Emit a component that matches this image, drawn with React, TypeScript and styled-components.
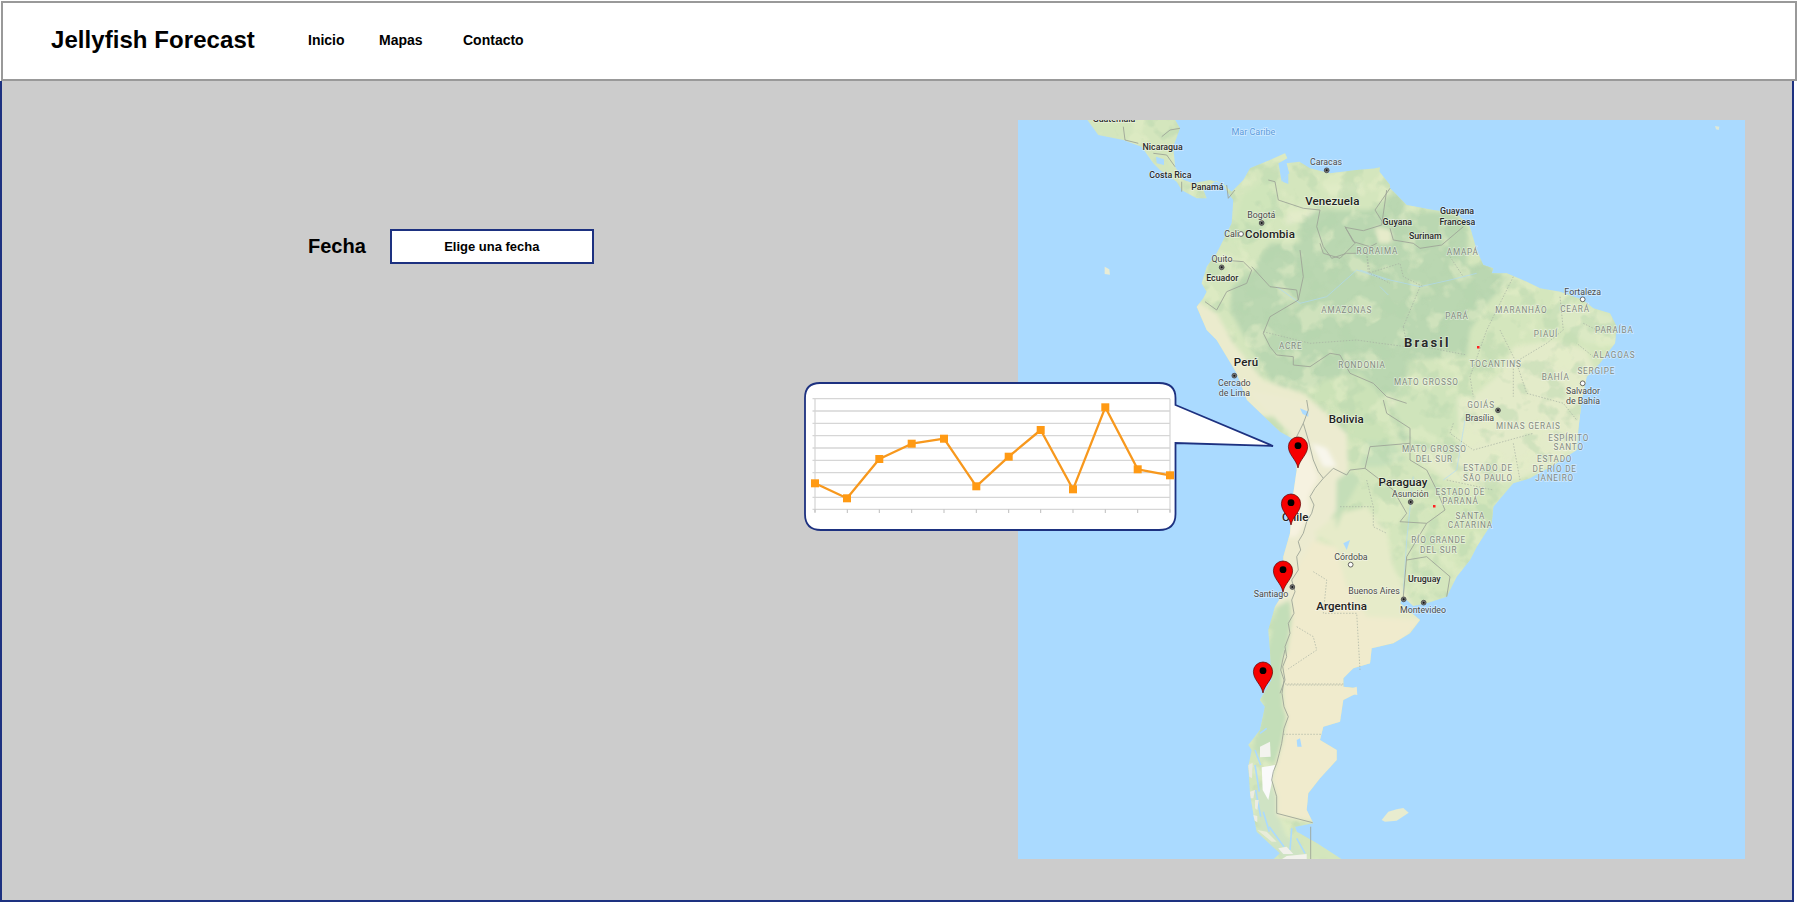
import React from "react";
import styled, { createGlobalStyle } from "styled-components";

const GlobalStyle = createGlobalStyle`
  html, body { margin: 0; padding: 0; background: #fff; overflow: hidden; }
  * { box-sizing: border-box; }
  body { font-family: "Liberation Sans", Arial, sans-serif; color: #000; }
`;

const Page = styled.div`
  display: flex;
  flex-direction: column;
  width: 1797px;
  height: 902px;
`;

const Header = styled.header`
  display: flex;
  align-items: center;
  height: 80px;
  margin: 1px 0 0 1px;
  padding: 0 0 2px 48px;
  background: #fff;
  border: 2px solid #999;
  position: relative;
  z-index: 1;
`;

const Brand = styled.h1`
  margin: 0;
  width: 257px;
  font-size: 24px;
  font-weight: 700;
  letter-spacing: 0.06px;
  white-space: nowrap;
`;

const Nav = styled.nav`
  display: flex;
  align-items: center;
`;

const NavLink = styled.a<{ $width: number }>`
  width: ${(p) => p.$width}px;
  font-size: 14px;
  font-weight: 700;
  color: #000;
  text-decoration: none;
`;

const Main = styled.main`
  position: relative;
  display: flex;
  align-items: flex-start;
  width: 1794px;
  height: 821px;
  padding: 39px 47px 0 306px;
  background: #ccc;
  border: 2px solid #1d3180;
  border-top: 0;
`;

const DateRow = styled.div`
  display: flex;
  align-items: center;
  gap: 24px;
  margin-top: 109px;
`;

const DateLabel = styled.span`
  font-size: 20px;
  font-weight: 700;
`;

const DateButton = styled.button`
  width: 204px;
  height: 35px;
  padding: 0;
  background: #fff;
  border: 2px solid #1d3180;
  font-family: inherit;
  font-size: 13px;
  font-weight: 700;
  color: #000;
`;

const MapFrame = styled.svg`
  display: block;
  flex: none;
  width: 727px;
  height: 739px;
  margin-left: auto;
  background: #aadaff;
`;

const Callout = styled.svg`
  position: absolute;
  left: 801px;
  top: 300px;
  width: 474px;
  height: 151px;
`;

const MapText = styled.text<{ $size: number; $weight: number; $color: string; $spacing: number }>`
  font-family: Roboto, "Liberation Sans", sans-serif;
  font-size: ${(p) => p.$size}px;
  font-weight: ${(p) => p.$weight};
  fill: ${(p) => p.$color};
  letter-spacing: ${(p) => p.$spacing}px;
  text-anchor: middle;
  dominant-baseline: central;
  paint-order: stroke;
  stroke: rgba(255, 255, 255, 0.45);
  stroke-width: 1.5px;
`;

type Origin = [number, number];
const Z3: Origin = [1010, 110];
const Z4: Origin = [1300, 110];
const Z5: Origin = [1180, 400];
const Z6: Origin = [1140, 650];

const pts = (o: Origin, flat: number[]) => {
  const out: string[] = [];
  for (let i = 0; i < flat.length; i += 2) {
    out.push(`${(o[0] + flat[i] / 3).toFixed(1)},${(o[1] + flat[i + 1] / 3).toFixed(1)}`);
  }
  return out.join(" ");
};

const LAND = [
  pts(Z3, [490,20,510,55,490,110,495,170,520,210,550,220,600,210,640,222,665,245,700,210,720,175,780,150,825,130,832,145,805,160,815,215,838,190,830,160,868,155,900,175,960,190,1040,180,1100,175,1140,225]),
  pts(Z4, [270,235,320,285,400,300,470,310,510,350,530,420,550,465,580,475,575,490,620,490,680,515,720,535,780,545,850,570,880,595,930,610,950,650,945,700,900,760,860,800,845,870,835,960,830,1020]),
  pts(Z5, [1130,190,1050,235,1000,250,940,320,935,370,890,440,870,480,830,530,800,590,740,610,700,618,670,590,660,610,720,660,690,700,640,730,575,745,570,790,520,805]),
  pts(Z6, [610,85,610,110,650,115,650,130,610,150,600,215,550,230,540,270,590,300,590,330,540,385,505,430,500,480,520,520,465,530,470,545,530,580,605,628,700,720,300,720,420,610,350,545,340,490,330,430,325,350,335,300,325,285,360,240,375,170,360,150,395,90,390,0]),
  pts(Z5, [265,690,285,620,310,580,310,470,330,400,340,280,350,210,345,120,300,95]),
  pts(Z3, [711,870,680,790,620,690,590,660,560,590,580,565,590,545,575,520,590,470,620,430,640,390,665,340,670,270,655,250,640,225,620,212,580,240,590,265,560,265,515,240,500,215,450,180,430,160,395,110,340,90,265,75,225,20]),
].join(" ");

type Zone = { o: Origin; p: number[]; fill: string };

const GREENS: Zone[] = [
  { o: Z4, p: [640,710,760,690,860,720,890,800,860,1030,470,1030,460,900,530,850,600,790], fill: "#e3ebc9" },
  { o: Z5, p: [600,-10,1190,-10,1150,180,1010,240,900,260,800,240,730,190,680,120,620,60], fill: "#e3ebc9" },
  { o: Z4, p: [770,560,880,600,940,620,945,700,860,700,780,640], fill: "#dbe9c4" },
  { o: Z5, p: [720,260,780,240,900,270,950,300,930,380,880,470,820,520,780,440], fill: "#d3e6bb" },
  { o: Z3, p: [665,530,720,490,780,400,870,400,930,340,940,310,1120,300,1140,240,1170,240,1190,300,1190,860,1000,830,900,830,830,860,790,825,720,710,660,600], fill: "#bad7b1" },
  { o: Z4, p: [50,300,220,300,330,310,400,305,470,315,505,360,500,470,560,460,590,490,640,500,570,570,510,660,500,740,330,750,260,800,250,850,120,740,0,760,0,300], fill: "#bad7b1" },
  { o: Z5, p: [385,-10,610,-10,690,85,680,130,600,70,500,50,430,20], fill: "#bad7b1" },
  { o: Z3, p: [835,305,930,295,880,330,825,345], fill: "#e2eacb" },
  { o: Z3, p: [930,225,1060,215,1060,250,960,255], fill: "#dceac4" },
  { o: Z4, p: [225,350,275,360,275,400,235,400], fill: "#e6ebca" },
  { o: Z3, p: [700,255,780,200,800,260,790,320,700,430,660,380], fill: "#cfe5ba" },
  { o: Z4, p: [70,810,180,790,250,860,300,960,230,1030,90,960,30,860], fill: "#cbe2b7" },
  { o: Z4, p: [300,810,470,830,480,1020,340,1010,280,900], fill: "#cfe4bb" },
  { o: Z5, p: [560,120,640,130,680,180,600,200,540,200], fill: "#c5dfb9" },
  { o: Z5, p: [600,640,700,630,710,680,640,720,590,700], fill: "#dbe8c3" },
];

const ARID: Zone[] = [
  { o: Z3, p: [540,560,620,610,670,700,760,810,880,850,960,920,700,920,540,640], fill: "#ebebcd" },
  { o: Z5, p: [200,-30,400,10,500,100,505,220,470,330,410,420,370,520,340,620,260,620,300,300,330,100], fill: "#ecebd0" },
  { o: Z5, p: [350,500,400,420,470,440,500,560,600,630,740,650,640,760,600,920,280,920,310,770,335,620], fill: "#f0ebcd" },
  { o: Z6, p: [435,-10,720,-10,720,540,410,500,395,390,425,280,440,200,430,170], fill: "#f0ebcd" },
  { o: Z5, p: [400,400,480,340,560,320,620,400,640,500,690,600,720,660,560,650,500,560,470,440], fill: "#e6ebc9" },
  { o: Z5, p: [470,240,510,212,540,240,490,330,468,390], fill: "#c4deb8" },
  { o: Z5, p: [340,120,390,160,415,235,385,290,390,340,350,410,318,410,335,250], fill: "#f6f2e0" },
  { o: Z5, p: [395,130,440,145,470,200,430,200], fill: "#f8f6ec" },
];

const SOUTH: Zone[] = [
  { o: Z6, p: [380,-10,436,-10,425,60,430,170,440,200,425,280,405,345,340,300,355,240,375,170,360,150], fill: "#c3deb8" },
  { o: Z6, p: [395,390,410,440,410,490,440,560,490,610,510,628,430,628,360,545,340,430], fill: "#cfe3c4" },
  { o: Z5, p: [265,750,290,620,330,600,335,660,320,760], fill: "#c3deb8" },
  { o: Z6, p: [470,530,515,530,600,628,510,628,480,580], fill: "#d4e6bd" },
];

const WHITES: Zone[] = [
  { o: Z6, p: [360,290,390,275,392,320,360,322], fill: "#f3f3ee" },
  { o: Z6, p: [365,352,405,345,395,400,385,450,368,420], fill: "#fafafa" },
  { o: Z6, p: [325,345,338,338,336,385,328,380], fill: "#e9eae0" },
  { o: Z6, p: [330,425,345,420,340,445,332,445], fill: "#ecece2" },
  { o: Z6, p: [345,450,356,450,352,480,345,475], fill: "#ecece2" },
  { o: Z6, p: [340,495,352,498,352,517,344,512], fill: "#ecece2" },
  { o: Z6, p: [352,540,380,545,410,575,395,575], fill: "#e8ecd9" },
  { o: Z6, p: [415,595,440,590,460,612,430,612], fill: "#f0f0ea" },
  { o: Z6, p: [440,618,500,612,500,628,425,628], fill: "#f2f2ec" },
  { o: Z6, p: [725,510,745,485,770,478,790,474,806,488,770,512,735,515], fill: "#e8eccf" },
  { o: Z6, p: [635,115,650,110,652,135,634,132], fill: "#f0ebcd" },
  { o: Z3, p: [284,470,298,478,300,494,284,492], fill: "#e8ecd5" },
  { o: Z3, p: [1095,175,1110,172,1108,190,1098,190], fill: "#d4e6bd" },
  { o: Z4, p: [1245,48,1258,50,1256,60,1248,58], fill: "#dfe9d8" },
];

const FJORDS: [Origin, number[]][] = [
  [Z6, [345,300,362,345]],
  [Z6, [345,345,358,425]],
  [Z6, [347,420,362,500]],
  [Z6, [370,485,388,545]],
  [Z6, [388,530,432,590]],
  [Z6, [455,535,450,600]],
  [Z6, [470,565,495,610]],
  [Z6, [360,250,380,235]],
];

const BORDERS: [Origin, number[]][] = [
  [Z3, [340,50,345,90,385,100]],
  [Z3, [455,80,480,60,510,55]],
  [Z3, [430,130,470,135,495,170]],
  [Z3, [515,215,515,245]],
  [Z3, [650,225,655,265,675,240]],
  [Z3, [775,210,795,215,805,270,880,295,930,300,920,350,940,410,965,445,1010,430,1040,430]],
  [Z3, [1005,350,1030,395,1080,410,1100,400]],
  [Z3, [1005,352,1060,362,1115,345,1130,240]],
  [Z3, [870,420,880,500,865,570,780,620,760,670,780,710,800,735,850,740,850,765,900,770,960,730,990,735,1020,790,1090,820,1130,860,1190,880]],
  [Z3, [640,450,700,455,725,480,710,520,650,545,620,600,585,575]],
  [Z3, [725,470,780,530,860,540,865,570]],
  [Z4, [250,340,225,300,270,235]],
  [Z4, [270,355,280,390,340,400,360,415,425,405,490,350]],
  [Z4, [135,350,165,400,120,445,70,430,60,400]],
  [Z5, [370,70,385,120,400,180,415,215,430,235,405,265,390,290,402,315,395,340,380,365,370,400,355,425,362,450,350,470,355,510,335,540,345,575,335,600,342,640,325,670,330,700,315,740,320,770,308,800,315,840,300,880]],
  [Z5, [370,70,345,120]],
  [Z5, [370,70,385,30,380,0]],
  [Z5, [430,235,460,205,500,225,510,210,555,205,570,140,690,130,690,85,620,40,610,0]],
  [Z5, [555,205,640,270,680,340,660,365,740,370,795,330,770,270,740,210,690,180,690,130]],
  [Z5, [740,370,680,470,670,590]],
  [Z5, [680,480,740,470,810,530,800,590]],
  [Z6, [435,0,428,30,422,60,432,90,426,130,432,170,445,200,432,235,425,280,418,310,410,340,400,365,395,390,410,440,410,490,518,518]],
  [Z6, [512,530,512,628]],
];

const DASHES: [Origin, number[]][] = [
  [Z3, [760,665,900,700,1040,690,1110,700,1190,710]],
  [Z3, [1070,430,1080,490,1140,520]],
  [Z4, [200,430,205,490,300,460,310,500,370,530]],
  [Z4, [450,440,490,500]],
  [Z4, [310,650,360,530]],
  [Z4, [310,650,320,700,500,735]],
  [Z4, [640,500,560,660,510,800,520,860]],
  [Z4, [780,560,790,660,740,700,640,760,640,860]],
  [Z4, [600,660,630,720,650,760,680,850,790,880,830,930]],
  [Z4, [460,940,450,970,520,1020,700,970]],
  [Z4, [850,640,890,660,940,660]],
  [Z4, [880,740,830,700]],
  [Z5, [560,240,580,320,580,380,620,400]],
  [Z5, [480,320,580,320]],
  [Z5, [400,515,440,540,430,640,490,640,530,640,540,810]],
  [Z5, [350,680,400,710,410,750,320,810]],
  [Z5, [320,855,490,855]],
  [Z5, [800,240,940,270]],
  [Z5, [1000,130,1020,240]],
  [Z6, [435,102,610,102]],
  [Z6, [430,253,545,253]],
];

const RIVERS: [Origin, number[]][] = [
  [Z4, [180,480,270,510,360,530,450,510,530,490]],
  [Z4, [240,530,265,555]],
  [Z3, [800,530,870,580,950,560,1040,480,1130,510]],
  [Z5, [855,60,830,210,790,240]],
  [Z5, [700,230,680,420,670,580]],
];

const WATERS: Zone[] = [
  { o: Z5, p: [360,25,385,35,385,50,368,42], fill: "#aadaff" },
  { o: Z3, p: [820,190,835,195,835,222,818,215], fill: "#aadaff" },
  { o: Z3, p: [438,140,462,148,462,165,440,160], fill: "#aadaff" },
  { o: Z6, p: [470,270,480,265,485,290,472,290], fill: "#aadaff" },
  { o: Z5, p: [490,430,510,420,500,450], fill: "#aadaff" },
];

type LabelKind = "country" | "large" | "medium" | "city" | "state" | "sea";
const KINDS: Record<LabelKind, { size: number; weight: number; color: string; spacing: number }> = {
  large: { size: 13, weight: 700, color: "#2a2a2a", spacing: 2.2 },
  country: { size: 11.5, weight: 500, color: "#222", spacing: 0.1 },
  medium: { size: 8.8, weight: 500, color: "#2b2b2b", spacing: 0 },
  city: { size: 8.8, weight: 400, color: "#4a4a4a", spacing: 0 },
  state: { size: 8.2, weight: 400, color: "#83897f", spacing: 0.8 },
  sea: { size: 9, weight: 400, color: "#5c9bdc", spacing: 0 },
};

const LABELS: [Origin, string, number, number, LabelKind][] = [
  [Z3, "Guatemala", 312, 28, "medium"],
  [Z3, "Mar Caribe", 730, 65, "sea"],
  [Z3, "Nicaragua", 458, 110, "medium"],
  [Z3, "Costa Rica", 481, 194, "medium"],
  [Z3, "Panamá", 592, 232, "medium"],
  [Z3, "Caracas", 948, 155, "city"],
  [Z3, "Venezuela", 967, 273, "country"],
  [Z3, "Bogotá", 754, 314, "city"],
  [Z3, "Cali", 665, 371, "city"],
  [Z3, "Colombia", 780, 371, "country"],
  [Z3, "Quito", 636, 447, "city"],
  [Z3, "Ecuador", 637, 504, "medium"],
  [Z3, "RORAIMA", 1102, 423, "state"],
  [Z3, "AMAZONAS", 1010, 601, "state"],
  [Z3, "ACRE", 842, 707, "state"],
  [Z3, "RONDONIA", 1056, 766, "state"],
  [Z3, "Perú", 708, 757, "country"],
  [Z3, "Cercado", 673, 819, "city"],
  [Z3, "de Lima", 673, 850, "city"],
  [Z4, "Guyana", 292, 335, "medium"],
  [Z4, "Guayana", 471, 304, "medium"],
  [Z4, "Francesa", 472, 335, "medium"],
  [Z4, "Surinam", 376, 378, "medium"],
  [Z4, "AMAPÁ", 488, 425, "state"],
  [Z4, "PARÁ", 471, 618, "state"],
  [Z4, "MARANHÃO", 664, 601, "state"],
  [Z4, "CEARÁ", 825, 597, "state"],
  [Z4, "Fortaleza", 848, 545, "city"],
  [Z4, "PARAÍBA", 943, 659, "state"],
  [Z4, "PIAUÍ", 738, 673, "state"],
  [Z4, "Brasil", 382, 697, "large"],
  [Z4, "TOCANTINS", 587, 761, "state"],
  [Z4, "ALAGOAS", 943, 735, "state"],
  [Z4, "SERGIPE", 889, 783, "state"],
  [Z4, "BAHÍA", 767, 801, "state"],
  [Z4, "Salvador", 849, 843, "city"],
  [Z4, "de Bahía", 849, 873, "city"],
  [Z4, "MATO GROSSO", 379, 816, "state"],
  [Z4, "GOIÁS", 543, 885, "state"],
  [Z4, "Brasília", 539, 923, "city"],
  [Z4, "MINAS GERAIS", 685, 947, "state"],
  [Z4, "ESPÍRITO", 806, 983, "state"],
  [Z4, "SANTO", 806, 1010, "state"],
  [Z4, "Bolivia", 139, 927, "country"],
  [Z5, "MATO GROSSO", 763, 147, "state"],
  [Z5, "DEL SUR", 763, 176, "state"],
  [Z5, "ESTADO DE", 924, 204, "state"],
  [Z5, "SÃO PAULO", 924, 233, "state"],
  [Z5, "ESTADO", 1124, 177, "state"],
  [Z5, "DE RÍO DE", 1124, 206, "state"],
  [Z5, "JANEIRO", 1124, 235, "state"],
  [Z5, "Paraguay", 669, 246, "country"],
  [Z5, "Asunción", 691, 281, "city"],
  [Z5, "ESTADO DE", 841, 275, "state"],
  [Z5, "PARANÁ", 841, 304, "state"],
  [Z5, "SANTA", 871, 347, "state"],
  [Z5, "CATARINA", 871, 376, "state"],
  [Z5, "RÍO GRANDE", 776, 420, "state"],
  [Z5, "DEL SUR", 776, 449, "state"],
  [Z5, "Córdoba", 513, 471, "city"],
  [Z5, "Uruguay", 733, 538, "medium"],
  [Z5, "Buenos Aires", 582, 574, "city"],
  [Z5, "Montevideo", 729, 631, "city"],
  [Z5, "Argentina", 485, 618, "country"],
  [Z5, "Chile", 346, 350, "country"],
  [Z5, "Santiago", 273, 583, "city"],
];

const CITIES: [Origin, number, number, boolean][] = [
  [Z3, 950, 181, true],
  [Z3, 755, 339, true],
  [Z3, 693, 372, false],
  [Z3, 635, 472, true],
  [Z3, 673, 797, true],
  [Z4, 848, 568, false],
  [Z4, 848, 820, false],
  [Z4, 594, 901, true],
  [Z5, 692, 306, true],
  [Z5, 512, 494, false],
  [Z5, 337, 561, true],
  [Z5, 671, 598, true],
  [Z5, 731, 608, true],
];

const PINS: [number, number][] = [
  [1298, 468],
  [1291, 525],
  [1283, 592],
  [1263, 693],
];

const GRID_Y = [398.7, 411, 423.3, 435.7, 448, 460.3, 472.7, 485, 497.3, 509.3];
const TICK_X = [815, 847.3, 879.3, 911.7, 944, 976.3, 1008.7, 1040.7, 1073, 1105.3, 1137.7, 1170];
const SERIES: [number, number][] = [
  [815, 483.3], [847, 498.3], [879.3, 459], [911.7, 443.7], [944, 438.7], [976.3, 486.3],
  [1008.7, 456.7], [1040.7, 430], [1073, 489.3], [1105.3, 407.3], [1137.7, 469.3], [1170, 475.3],
];

const Zones = ({ list }: { list: Zone[] }) => (
  <>
    {list.map((z, i) => (
      <polygon key={i} points={pts(z.o, z.p)} fill={z.fill} />
    ))}
  </>
);

function MapArt() {
  return (
    <MapFrame viewBox="1018 120 727 739" role="img" aria-label="Mapa de Sudamérica">
      <defs>
        <clipPath id="land">
          <polygon points={LAND} />
        </clipPath>
        <filter id="soft" x="-5%" y="-5%" width="110%" height="110%">
          <feGaussianBlur stdDeviation="2" />
        </filter>
        <filter id="softer" x="-5%" y="-5%" width="110%" height="110%">
          <feGaussianBlur stdDeviation="0.4" />
        </filter>
        <filter id="mottleLight" x="0" y="0" width="100%" height="100%" colorInterpolationFilters="sRGB">
          <feTurbulence type="fractalNoise" baseFrequency="0.04" numOctaves="3" seed="7" />
          <feColorMatrix values="0 0 0 0 0.89  0 0 0 0 0.93  0 0 0 0 0.78  7 0 0 0 -3.7" />
        </filter>
        <filter id="mottleDark" x="0" y="0" width="100%" height="100%" colorInterpolationFilters="sRGB">
          <feTurbulence type="fractalNoise" baseFrequency="0.05" numOctaves="3" seed="21" />
          <feColorMatrix values="0 0 0 0 0.71  0 0 0 0 0.83  0 0 0 0 0.68  7 0 0 0 -3.7" />
        </filter>
      </defs>
      <g filter="url(#softer)">
        <polygon points={LAND} fill="#d4e6bd" />
        <g clipPath="url(#land)">
          <g filter="url(#soft)">
            <Zones list={GREENS} />
          </g>
          <rect x="1018" y="120" width="727" height="739" filter="url(#mottleLight)" opacity="0.5" />
          <rect x="1018" y="120" width="727" height="739" filter="url(#mottleDark)" opacity="0.4" />
          <g filter="url(#soft)">
            <Zones list={ARID} />
            <Zones list={SOUTH} />
          </g>
          {RIVERS.map(([o, p], i) => (
            <polyline key={i} points={pts(o, p)} fill="none" stroke="#aadaff" strokeWidth="0.8" opacity="0.7" />
          ))}
          <Zones list={WATERS} />
          {FJORDS.map(([o, p], i) => (
            <polyline key={i} points={pts(o, p)} fill="none" stroke="#aadaff" strokeWidth="1.6" />
          ))}
        </g>
        <Zones list={WHITES} />
        {DASHES.map(([o, p], i) => (
          <polyline key={i} points={pts(o, p)} fill="none" stroke="#a6b0a2" strokeWidth="0.7" strokeDasharray="1.5 1.5" />
        ))}
        {BORDERS.map(([o, p], i) => (
          <polyline key={i} points={pts(o, p)} fill="none" stroke="#9ea597" strokeWidth="0.9" />
        ))}
      </g>
      {CITIES.map(([o, x, y, filled], i) => {
        const cx = o[0] + x / 3;
        const cy = o[1] + y / 3;
        return (
          <g key={i}>
            <circle cx={cx} cy={cy} r="2.4" fill={filled ? "#777" : "#fff"} stroke="#444" strokeWidth="0.8" />
            {filled && <circle cx={cx} cy={cy} r="1" fill="#111" />}
          </g>
        );
      })}
      {LABELS.map(([o, t, x, y, k], i) => {
        const s = KINDS[k];
        return (
          <MapText key={i} x={o[0] + x / 3} y={o[1] + y / 3} $size={s.size} $weight={s.weight} $color={s.color} $spacing={s.spacing}>
            {t}
          </MapText>
        );
      })}
      <rect x="1477" y="346" width="2.5" height="2.5" fill="#f22" />
      <rect x="1433" y="505" width="2.5" height="2.5" fill="#f22" />
      {PINS.map(([x, y], i) => (
        <g key={i} transform={`translate(${x} ${y})`}>
          <path d="M0 0C-1.8 -9 -9.6 -13 -9.6 -21.4A9.6 9.6 0 1 1 9.6 -21.4C9.6 -13 1.8 -9 0 0Z" fill="#f60000" stroke="#5c0000" strokeWidth="0.7" />
          <circle cx="0" cy="-22.3" r="3.4" fill="#000" />
        </g>
      ))}
    </MapFrame>
  );
}

function ChartCallout() {
  return (
    <Callout viewBox="803 381 474 151" role="img" aria-label="Gráfico">
      <path
        d="M820 383H1159Q1175.5 383 1175.5 398V405L1273 446L1175.5 443V514Q1175.5 530 1159 530H821Q805 530 805 514V398Q805 383 820 383Z"
        fill="#fff"
        stroke="#1d3180"
        strokeWidth="1.8"
        strokeLinejoin="miter"
      />
      {GRID_Y.map((y) => (
        <line key={y} x1="812.5" x2="1170" y1={y} y2={y} stroke="#d6d6d6" strokeWidth="1.3" />
      ))}
      <line x1="815" x2="815" y1="398.7" y2="512" stroke="#d4d4d4" strokeWidth="1.2" />
      <line x1="1170" x2="1170" y1="398.7" y2="512" stroke="#d4d4d4" strokeWidth="1.2" />
      {TICK_X.map((x) => (
        <line key={x} x1={x} x2={x} y1="509.3" y2="513" stroke="#bdbdbd" strokeWidth="1" />
      ))}
      <polyline points={SERIES.map((p) => p.join(",")).join(" ")} fill="none" stroke="#f7981d" strokeWidth="2.3" strokeLinejoin="round" />
      {SERIES.map(([x, y]) => (
        <rect key={x} x={x - 4} y={y - 4} width="8" height="8" fill="#ff9a14" />
      ))}
    </Callout>
  );
}

export default function App() {
  return (
    <Page>
      <GlobalStyle />
      <Header>
        <Brand>Jellyfish Forecast</Brand>
        <Nav>
          <NavLink $width={71} href="#inicio">Inicio</NavLink>
          <NavLink $width={84} href="#mapas">Mapas</NavLink>
          <NavLink $width={70} href="#contacto">Contacto</NavLink>
        </Nav>
      </Header>
      <Main>
        <DateRow>
          <DateLabel>Fecha</DateLabel>
          <DateButton type="button">Elige una fecha</DateButton>
        </DateRow>
        <MapArt />
        <ChartCallout />
      </Main>
    </Page>
  );
}
